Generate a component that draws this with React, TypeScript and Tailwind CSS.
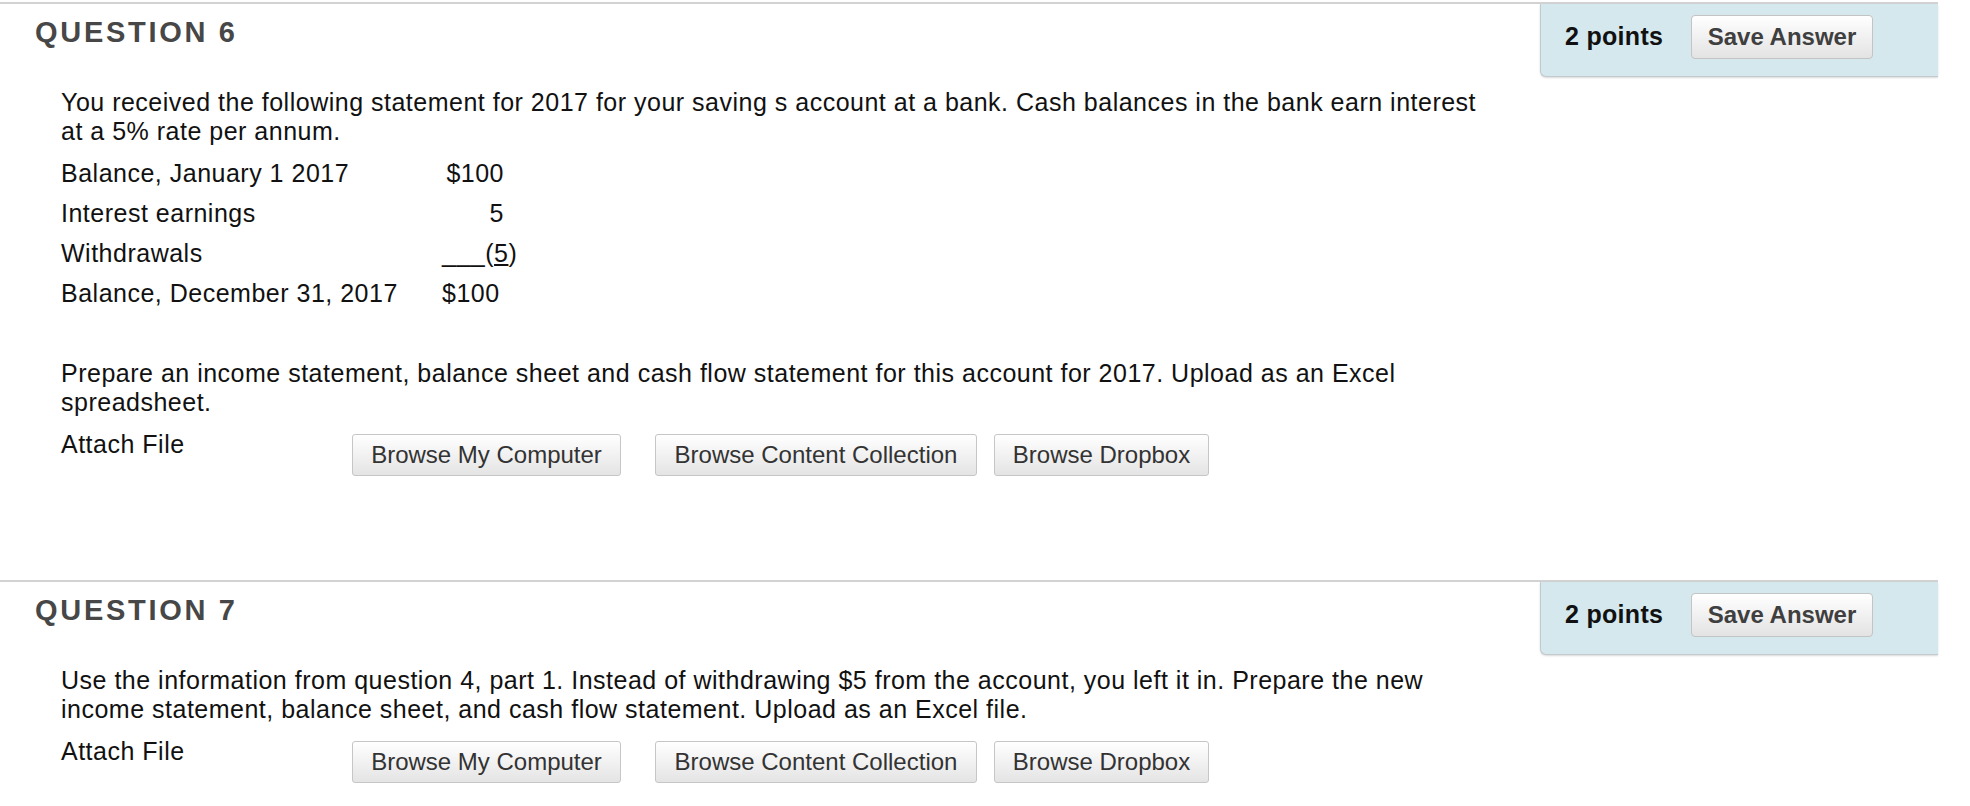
import React from "react";

const BODY = "font-['Liberation_Sans','Helvetica_Neue',Arial,sans-serif]";

function AttachRow() {
  const btn =
    "h-[42px] shrink-0 rounded-[3px] border border-[#c6c6c6] bg-gradient-to-b from-[#ffffff] to-[#e4e4e4] text-[24px] text-[#333333] leading-none flex items-center justify-center";
  return (
    <div className="flex items-start">
      <div className="w-[291px] shrink-0 leading-[40px]">Attach File</div>
      <div className="flex mt-[10px] tracking-normal">
        <button className={`${btn} w-[269px]`}>Browse My Computer</button>
        <button className={`${btn} w-[322px] ml-[34px]`}>Browse Content Collection</button>
        <button className={`${btn} w-[215px] ml-[17px]`}>Browse Dropbox</button>
      </div>
    </div>
  );
}

function PointsPanel() {
  return (
    <div className="w-[398px] h-[73px] shrink-0 bg-[#d4e8ee] border-l border-b border-[#c3cacd] rounded-bl-[6px] shadow-[0_1px_2px_rgba(0,0,0,0.15)] pl-[24px] pt-[11px]">
      <div className="flex items-center h-[44px]">
        <span className="w-[126px] shrink-0 text-[25px] tracking-[0.3px] font-bold text-[#111111]">2 points</span>
        <button className="w-[182px] h-[44px] rounded-[4px] border border-[#c4c4c4] bg-gradient-to-b from-[#ffffff] to-[#e3e3e3] text-[24px] font-bold text-[#3f3f3f] leading-none">
          Save Answer
        </button>
      </div>
    </div>
  );
}

function Question({ num, children }: { num: number; children: React.ReactNode }) {
  return (
    <section className="flex items-start border-t-2 border-[#d2d2d2]">
      <div className="flex-1 pl-[35px] pb-[104px]">
        <h2 className="mt-[14px] text-[29px] leading-none font-bold tracking-[2.7px] text-[#474747]">
          QUESTION {num}
        </h2>
        <div className="pl-[26px] mt-[41px] text-[25px] tracking-[0.5px] text-[#111111]">{children}</div>
      </div>
      <PointsPanel />
    </section>
  );
}

function Para({ lines }: { lines: string[] }) {
  return (
    <div className="leading-[29px] mb-[7px]">
      {lines.map((l) => (
        <div key={l} className="whitespace-nowrap">
          {l}
        </div>
      ))}
    </div>
  );
}

export default function App() {
  const rows: { label: string; value: React.ReactNode; align: string }[] = [
    { label: "Balance, January 1 2017", value: "$100", align: "text-right" },
    { label: "Interest earnings", value: "5", align: "text-right" },
    {
      label: "Withdrawals",
      value: (
        <>
          ___(<span className="underline">5</span>)
        </>
      ),
      align: "",
    },
    { label: "Balance, December 31, 2017", value: "$100", align: "" },
  ];

  return (
    <div className={`w-[1938px] bg-white pt-[2px] ${BODY}`}>
      <Question num={6}>
        <Para
          lines={[
            "You received the following statement for 2017 for your saving s account at a bank. Cash balances in the bank earn interest",
            "at a 5% rate per annum.",
          ]}
        />
        <div className="mb-[46px]">
          {rows.map((r) => (
            <div key={r.label} className="flex leading-[40px]">
              <div className="w-[381px] shrink-0">{r.label}</div>
              <div className={`w-[62px] whitespace-nowrap ${r.align}`}>{r.value}</div>
            </div>
          ))}
        </div>
        <Para
          lines={[
            "Prepare an income statement, balance sheet and cash flow statement for this account for 2017. Upload as an Excel",
            "spreadsheet.",
          ]}
        />
        <AttachRow />
      </Question>
      <Question num={7}>
        <Para
          lines={[
            "Use the information from question 4, part 1. Instead of withdrawing $5 from the account, you left it in. Prepare the new",
            "income statement, balance sheet, and cash flow statement. Upload as an Excel file.",
          ]}
        />
        <AttachRow />
      </Question>
    </div>
  );
}
